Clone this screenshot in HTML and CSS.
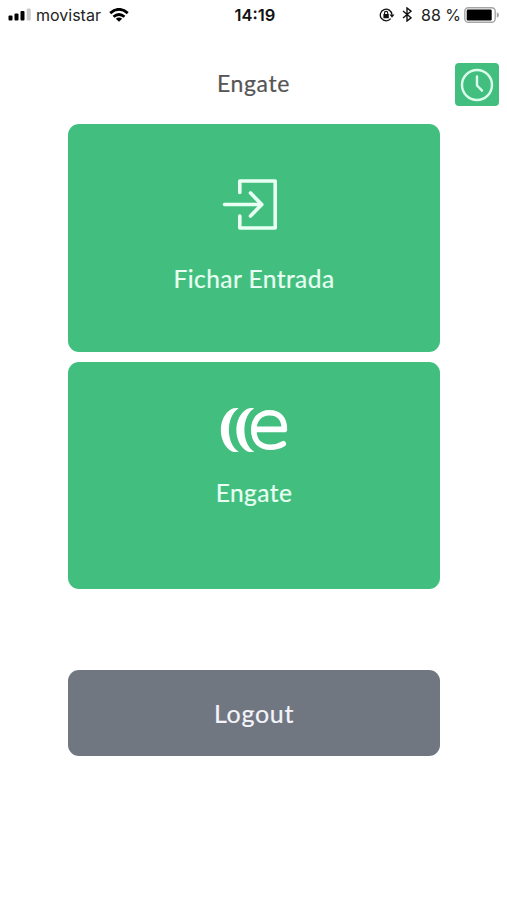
FILE: index.html
```html
<!DOCTYPE html>
<html lang="es">
<head>
<meta charset="utf-8">
<meta name="viewport" content="width=device-width">
<title>Engate</title>
<link rel="stylesheet" href="styles.css">
</head>
<body>
<header class="status">
  <div class="status-left">
    <svg class="signal" width="24" height="13" viewBox="0 0 24 13"><rect x="0.5" y="7.5" width="4" height="5" rx="1"/><rect x="6.5" y="5.5" width="4" height="7" rx="1"/><rect x="12.5" y="3" width="4" height="9.5" rx="1"/><rect x="18.7" y="0.5" width="4" height="12" rx="1" fill="#c9c9c9"/></svg>
    <span class="carrier">movistar</span>
    <svg class="wifi" width="20" height="14" viewBox="0 0 20 14" fill="none" stroke="#000" stroke-width="2.8"><path d="M1.2 5.1Q10 -2.4 18.8 5.1M4.5 8.8Q10 4.2 15.5 8.8"/><path d="M6.8 10.8Q10 8.2 13.2 10.8L10 13.8Z" fill="#000" stroke="none"/></svg>
  </div>
  <time class="clock">14:19</time>
  <div class="status-right">
    <svg width="16" height="14" viewBox="0 0 16 14" fill="none" stroke="#111" stroke-width="1.3"><path d="M11.7 10.6A5.8 5.8 0 1 1 12.9 6.6"/><path d="M10.5 6.5H15.5L13 9.8Z" fill="#111" stroke="none"/><path d="M5.5 6.4V5a1.6 1.6 0 0 1 3.2 0V6.4" stroke-width="1.1"/><rect x="4.4" y="6" width="5.4" height="4.2" rx=".5" fill="#111" stroke="none"/></svg>
    <svg class="bluetooth" width="10" height="15" viewBox="0 0 10 15" fill="none" stroke="#111" stroke-width="1.4"><path d="M1 4L9 10.8L5 14V1L9 4.2L1 11"/></svg>
    <span class="percent">88 %</span>
    <svg class="battery" width="36" height="16" viewBox="0 0 36 16"><rect x=".8" y=".8" width="30.4" height="14.4" rx="3.5" fill="#fff" stroke="#a5a5a5" stroke-width="1.4"/><rect x="2.7" y="2.6" width="25" height="10.8" rx="1.2"/><path d="M32.8 5.2Q35 6 35 8T32.8 10.8Z" fill="#a5a5a5"/></svg>
  </div>
</header>
<div class="titlebar">
  <h1 class="title">Engate</h1>
  <button class="history" aria-label="Historial">
    <svg width="34" height="34" viewBox="0 0 34 34" fill="none" stroke="#dcffec" stroke-width="2.4" stroke-linecap="round" stroke-linejoin="round"><circle cx="17" cy="17" r="15"/><path d="M17 8.5V17.5L22 22.7"/></svg>
  </button>
</div>
<main class="actions">
  <button class="card card-entry">
    <svg width="64" height="54" viewBox="0 0 64 54" fill="none" stroke="#e9fff3" stroke-width="3.6" stroke-linecap="round" stroke-linejoin="round"><path d="M17.8 14.5V3H53.2V50H17.8V38M2.5 26.5H39.5M28.5 15L39.8 26.5L28.5 38"/></svg>
    <span class="label label-entry">Fichar Entrada</span>
  </button>
  <button class="card card-brand">
    <svg width="68" height="46" viewBox="220 407 68 46"><path d="M231.5 409Q235 407.3 238.8 408.3C225.6 416 225.6 444 238.8 451.7Q235 452.7 231.5 451.2C217.3 443 217.3 417 231.5 409ZM247 409Q250.5 407.3 254.3 408.3C241.1 416 241.1 444 254.3 451.7Q250.5 452.7 247 451.2C232.8 443 232.8 417 247 409Z" fill="#fff"/><path d="M254 429.4H284.4C284.4 418.5 278.5 412.8 269.5 412.8C260 412.8 253.8 419.5 253.8 430C253.8 441 260.3 447.2 270.5 447.2Q277.5 447.2 283.2 443.8" fill="none" stroke="#fff" stroke-width="5.6" stroke-linecap="round" stroke-linejoin="round"/></svg>
    <span class="label label-brand">Engate</span>
  </button>
  <button class="card card-logout"><span class="label label-logout">Logout</span></button>
</main>
</body>
</html>
```
FILE: styles.css
```css
* { box-sizing: border-box; }
body { margin: 0; height: 900px; background: #fff; font-family: Lato, sans-serif; overflow: hidden; }
svg { display: block; flex: none; }
button { border: 0; padding: 0; font: inherit; }
.status { height: 30px; padding: 0 7px 0 8px; display: grid; grid-template-columns: 1fr auto 1fr; align-items: center; font-family: Inter, sans-serif; font-size: 16px; color: #222; }
.status-left, .status-right { display: flex; align-items: center; height: 29px; align-self: start; white-space: nowrap; }
.status-right { justify-content: flex-end; }
.carrier { margin: 0 8px 0 4px; font-size: 16px; }
.clock { font-size: 16.5px; font-weight: 600; color: #111; padding-left: 2px; }
.bluetooth { margin: 0 9px 0 7px; }
.percent { margin-right: 3px; }
.titlebar { height: 94px; padding: 33px 8px 0; display: grid; grid-template-columns: 44px 1fr 44px; align-items: start; }
.title { grid-column: 2; margin: 6px 0 0; text-align: center; font-size: 23px; line-height: 28px; font-weight: 400; color: #555; letter-spacing: .6px; -webkit-text-stroke: .2px; }
.history { width: 44px; height: 43px; border-radius: 4px; background: #42bf7f; display: grid; place-items: center; }
.actions { width: 372px; margin: 0 auto 0 68px; display: flex; flex-direction: column; }
.card { display: flex; flex-direction: column; align-items: center; border-radius: 11px; background: #42bf7f; color: #e9fff3; }
.card-entry { height: 228px; padding-top: 54px; }
.card-brand { height: 227px; margin-top: 10px; padding-top: 45px; }
.card-logout { height: 86px; margin-top: 81px; justify-content: center; background: #717780; color: #f3f5fb; }
.label { font-size: 24.5px; line-height: 30px; letter-spacing: .45px; white-space: nowrap; -webkit-text-stroke: .2px; }
.label-entry { margin-top: 32px; }
.label-brand { margin-top: 25px; }
.label-logout { font-size: 25px; letter-spacing: .7px; }
```
